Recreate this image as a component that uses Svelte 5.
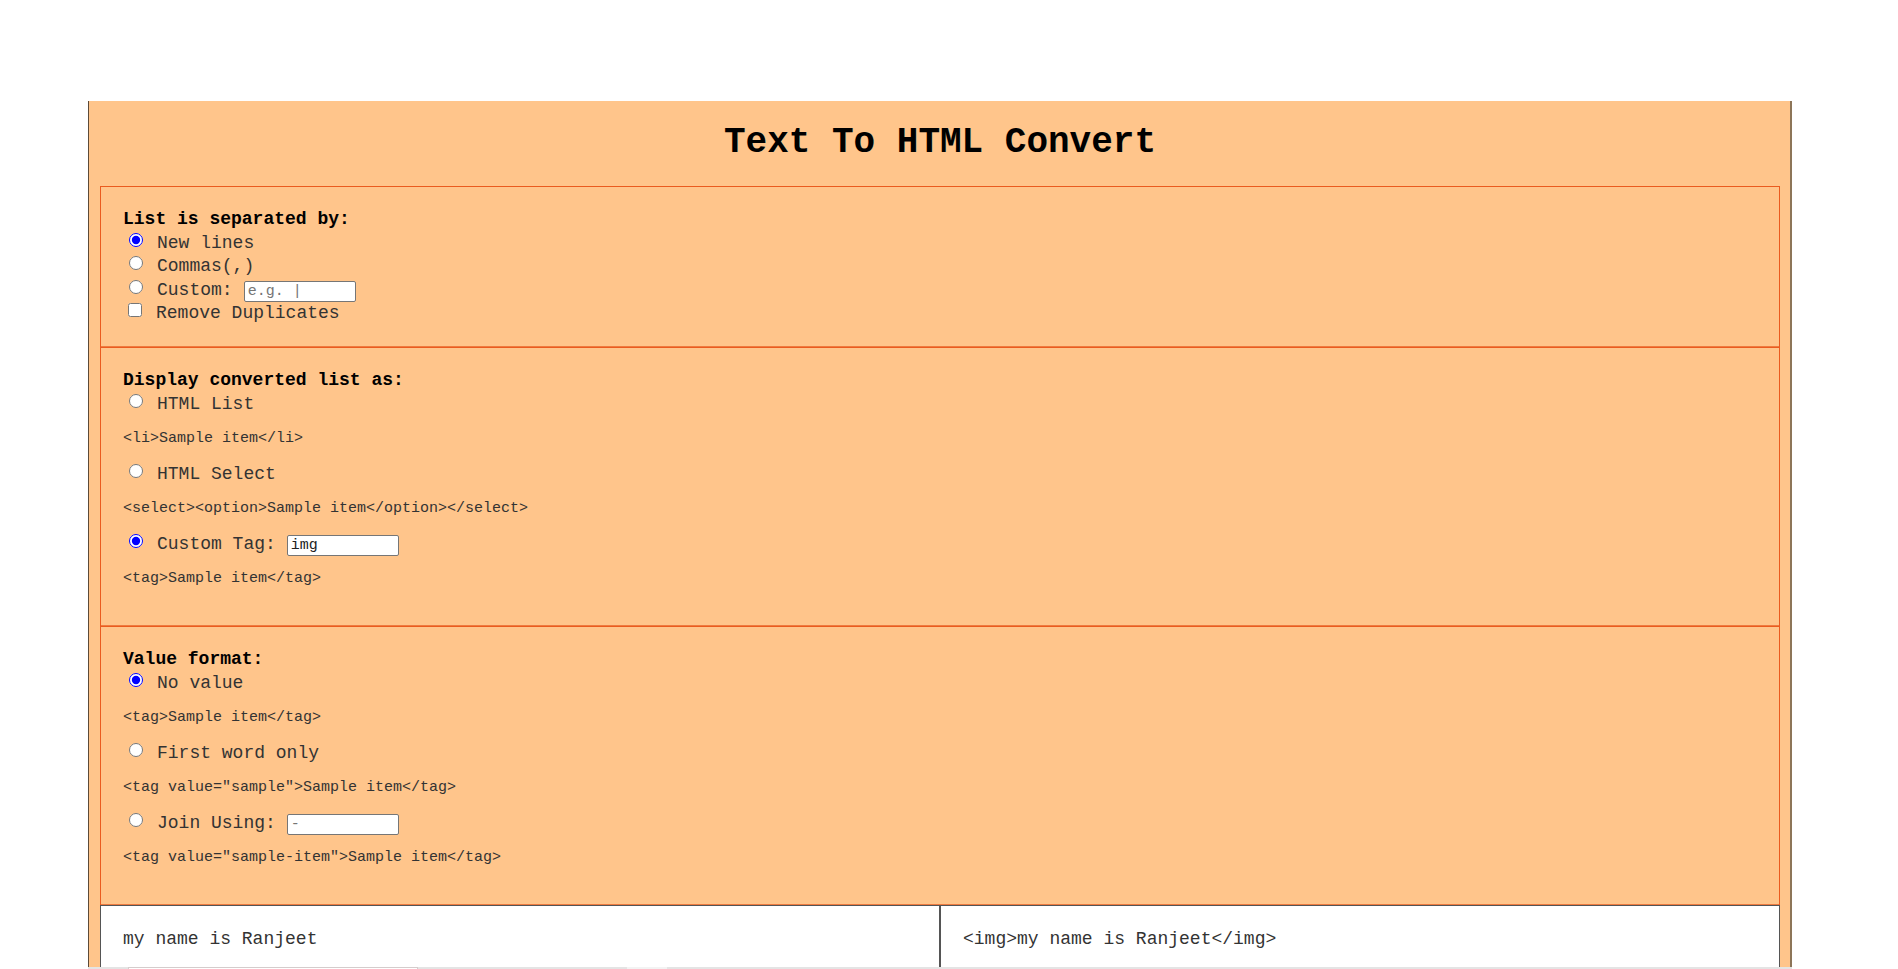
<script>
  let separator = $state('newline');
  let removeDuplicates = $state(false);
  let separatorText = $state('');
  let display = $state('custom');
  let tagName = $state('img');
  let format = $state('none');
  let joiner = $state('');
</script>

<main>
  <h1>Text To HTML Convert</h1>

  <fieldset>
    <legend>List is separated by:</legend>
    <div class="row plain">
      <input id="sep-newline" type="radio" name="separator" value="newline" bind:group={separator} />
      <label for="sep-newline">New lines</label>
    </div>
    <div class="row">
      <input id="sep-comma" type="radio" name="separator" value="comma" bind:group={separator} />
      <label for="sep-comma">Commas(,)</label>
    </div>
    <div class="row plain">
      <input id="sep-custom" type="radio" name="separator" value="custom" bind:group={separator} />
      <label for="sep-custom">Custom:</label>
      <input type="text" aria-label="Custom separator" placeholder="e.g. |" bind:value={separatorText} />
    </div>
    <div class="row">
      <input id="dedupe" type="checkbox" bind:checked={removeDuplicates} />
      <label for="dedupe">Remove Duplicates</label>
    </div>
  </fieldset>

  <fieldset class="samples">
    <legend>Display converted list as:</legend>
    <div class="row">
      <input id="as-list" type="radio" name="display" value="list" bind:group={display} />
      <label for="as-list">HTML List</label>
    </div>
    <pre>{'<li>Sample item</li>'}</pre>
    <div class="row">
      <input id="as-select" type="radio" name="display" value="select" bind:group={display} />
      <label for="as-select">HTML Select</label>
    </div>
    <pre>{'<select><option>Sample item</option></select>'}</pre>
    <div class="row">
      <input id="as-custom" type="radio" name="display" value="custom" bind:group={display} />
      <label for="as-custom">Custom Tag:</label>
      <input type="text" aria-label="Tag name" bind:value={tagName} />
    </div>
    <pre>{'<tag>Sample item</tag>'}</pre>
  </fieldset>

  <fieldset class="samples">
    <legend>Value format:</legend>
    <div class="row">
      <input id="value-none" type="radio" name="format" value="none" bind:group={format} />
      <label for="value-none">No value</label>
    </div>
    <pre>{'<tag>Sample item</tag>'}</pre>
    <div class="row">
      <input id="value-first" type="radio" name="format" value="first" bind:group={format} />
      <label for="value-first">First word only</label>
    </div>
    <pre>{'<tag value="sample">Sample item</tag>'}</pre>
    <div class="row">
      <input id="value-join" type="radio" name="format" value="join" bind:group={format} />
      <label for="value-join">Join Using:</label>
      <input type="text" aria-label="Join character" placeholder="-" bind:value={joiner} />
    </div>
    <pre>{'<tag value="sample-item">Sample item</tag>'}</pre>
  </fieldset>

  <div class="panes">
    <div class="pane">my name is Ranjeet</div>
    <div class="pane">{'<img>my name is Ranjeet</img>'}</div>
  </div>
</main>
<div class="edge"><span class="box"></span><span class="grip"></span></div>

<style>
  :global(body) {
    background: #fff;
  }

  main,
  .edge {
    box-sizing: border-box;
    margin: 0 106px 0 88px;
  }

  main {
    margin-top: 101px;
    padding: 0 10px 0 11px;
    border-left: 1px solid #5c4a38;
    border-right: 2px solid #8d7558;
    background: #ffc58b;
    color: #333;
    font: 18px/24px "Courier New", "Liberation Mono", monospace;
  }

  h1 {
    margin: 0;
    padding: 22px 0 23px;
    color: #000;
    font-size: 36px;
    line-height: 40px;
    text-align: center;
  }

  fieldset {
    min-width: 0;
    margin: 0;
    padding: 20px 22px 22px;
    border: 1px solid #ea5b1f;
    border-bottom: 0;
    box-shadow: inset 0 -1px #ee7b40;
  }

  fieldset.samples {
    padding-bottom: 24px;
  }

  legend {
    float: left;
    width: 100%;
    padding: 0;
    color: #000;
    font-weight: bold;
  }

  .row {
    display: flex;
    clear: both;
    height: 24px;
  }

  .row.plain {
    height: 23px;
  }

  input[type="radio"],
  input[type="checkbox"] {
    flex: none;
    width: 14px;
    height: 14px;
    margin: 2px 14px 0 6px;
    accent-color: #00f;
  }

  input[type="checkbox"] {
    margin-left: 5px;
  }

  input[type="text"] {
    box-sizing: border-box;
    width: 112px;
    height: 21px;
    margin: 3px 0 0 11px;
    padding: 0 3px;
    border: 1px solid #767676;
    border-radius: 2px;
    background: #fff;
    color: #222;
    font: 15px/19px "Courier New", "Liberation Mono", monospace;
  }

  pre {
    margin: 13px 0;
    font: 15px/20px "Courier New", "Liberation Mono", monospace;
  }

  .panes {
    display: grid;
    grid-template-columns: 1fr 1fr;
    border: solid #555;
    border-width: 1px 1px 0;
    background: #fff;
  }

  .pane {
    padding: 21px 22px 16px;
    border-right: 1px solid #555;
  }

  .pane + .pane {
    border-right: 0;
    border-left: 1px solid #555;
  }

  .edge {
    display: flex;
    gap: 209px;
    height: 2px;
    padding-left: 40px;
    background: #e4e4e4;
  }

  .box {
    box-sizing: border-box;
    width: 290px;
    border: solid #d5cccc;
    border-width: 1px 1px 0;
    background: #fff;
  }

  .grip {
    width: 40px;
    background: #f3f3f3;
  }
</style>
